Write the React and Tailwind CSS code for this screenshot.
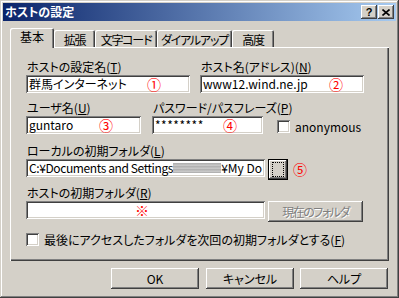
import React from "react";

const raised = "shadow-[inset_-1px_-1px_#404040,inset_1px_1px_#ffffff,inset_-2px_-2px_#808080,inset_2px_2px_#d4d0c8]";
const sunken = "shadow-[inset_1px_1px_#808080,inset_-1px_-1px_#ffffff,inset_2px_2px_#404040,inset_-2px_-2px_#d4d0c8]";

function Label({ text, mn }) {
  return (
    <div className="h-[12px] leading-[12px] whitespace-nowrap pl-px">
      {text}(<span className="underline">{mn}</span>)
    </div>
  );
}

function Input({ w, children, className = "" }) {
  return (
    <div className={`relative h-[18px] bg-white ${sunken} flex items-center pl-[3px] pr-[3px] overflow-hidden whitespace-nowrap ${w} ${className}`}>
      {children}
    </div>
  );
}

function Mark({ c, className }) {
  return <span className={`absolute top-1/2 -translate-y-1/2 text-[14px] leading-[14px] text-[#ff0000] ${className}`}>{c}</span>;
}

function Check() {
  return <div className={`w-[13px] h-[13px] bg-white shrink-0 ${sunken}`} />;
}

export default function App() {
  return (
    <div className="w-[399px] h-[298px] bg-[#d4d0c8] p-[3px] flex flex-col text-[12px] text-black font-['Noto_Sans_CJK_JP','Noto_Sans',sans-serif] [font-feature-settings:'palt'] shadow-[inset_-1px_-1px_#404040,inset_1px_1px_#d4d0c8,inset_-2px_-2px_#808080,inset_2px_2px_#ffffff]">
      {/* title bar */}
      <div className="h-[18px] flex items-center justify-between bg-[linear-gradient(to_right,#0a246a,#a6caf0)]">
        <span className="ml-[2px] text-white font-bold leading-[14px]">ホストの設定</span>
        <div className="flex gap-[1px] mr-[2px]">
          <div className={`w-[16px] h-[14px] bg-[#d4d0c8] ${raised} flex items-center justify-center text-[11px] font-bold leading-none font-['Liberation_Sans',sans-serif]`}>?</div>
          <div className={`w-[16px] h-[14px] bg-[#d4d0c8] ${raised} flex items-center justify-center`}>
            <svg width="8" height="7" viewBox="0 0 8 7"><path d="M0.5 0.5L7.5 6.5M7.5 0.5L0.5 6.5" stroke="#000" strokeWidth="1.6" /></svg>
          </div>
        </div>
      </div>

      {/* tabs */}
      <div className="ml-[7px] mt-[7px] h-[19px] flex items-end">
        <div className="relative z-10 w-[44px] h-[20px] -mb-px bg-[#d4d0c8] rounded-t-[2px] shadow-[inset_1px_1px_#ffffff,inset_-1px_0_#404040,inset_-2px_0_#808080] flex justify-center pt-[2px] leading-[14px]">基本</div>
        {[
          ["拡張", "w-[41px]"],
          ["文字コード", "w-[62px]"],
          ["ダイアルアップ", "w-[75px]"],
          ["高度", "w-[42px]"],
        ].map(([t, w]) => (
          <div key={t} className={`${w} h-[17px] rounded-t-[2px] shadow-[inset_1px_1px_#ffffff,inset_-1px_0_#404040,inset_-2px_0_#808080] flex justify-center pt-[3px] leading-[14px] whitespace-nowrap tracking-[-1.2px]`}>{t}</div>
        ))}
      </div>

      {/* panel */}
      <div className="ml-[7px] w-[379px] h-[214px] shadow-[inset_1px_1px_#ffffff,inset_-1px_-1px_#404040,inset_-2px_-2px_#808080] pl-[16px] pt-[14px] flex flex-col">
        <div className="flex">
          <div className="w-[164px] mr-[10px] flex flex-col gap-[2px]">
            <Label text="ホストの設定名" mn="T" />
            <Input w="w-[164px]">群馬インターネット<Mark c="①" className="left-[121px]" /></Input>
          </div>
          <div className="w-[164px] flex flex-col gap-[2px]">
            <Label text="ホスト名(アドレス)" mn="N" />
            <Input w="w-[164px]">www12.wind.ne.jp<Mark c="②" className="left-[129px]" /></Input>
          </div>
        </div>

        <div className="flex mt-[9px]">
          <div className="w-[115px] mr-[11px] flex flex-col gap-[2px]">
            <Label text="ユーザ名" mn="U" />
            <Input w="w-[115px]">guntaro<Mark c="③" className="left-[73px]" /></Input>
          </div>
          <div className="w-[111px] flex flex-col gap-[2px]">
            <Label text="パスワード/パスフレーズ" mn="P" />
            <Input w="w-[111px]"><span className="tracking-[0.5px]">********</span><Mark c="④" className="left-[71px]" /></Input>
          </div>
          <div className="ml-[14px] pt-[18px] flex items-center h-[31px]">
            <Check />
            <span className="ml-[5px] leading-[13px]">anonymous</span>
          </div>
        </div>

        <div className="mt-[11px] flex flex-col gap-[2px]">
          <Label text="ローカルの初期フォルダ" mn="L" />
          <div className="flex items-start">
            <Input w="w-[239px]">
              <span className="tracking-[-0.4px]">C:¥Documents and Settings</span>
              <div className="flex-1 h-[10px] bg-[repeating-linear-gradient(to_bottom,#b8b8b8_0px,#6a6a6a_1px,#d8d8d8_2px,#888888_3px)] opacity-70" />
              <span>¥My Do</span>
            </Input>
            <div className="ml-[3px] w-[20px] h-[21px] bg-[#d4d0c8] border border-black shadow-[inset_-1px_-1px_#404040,inset_1px_1px_#ffffff,inset_-2px_-2px_#808080] flex items-center justify-center">
              <div className="w-[12px] h-[15px] border border-dotted border-black" />
            </div>
            <span className="ml-[5px] mt-[3px] text-[14px] leading-[14px] text-[#ff0000]">⑤</span>
          </div>
        </div>

        <div className="mt-[7px] flex flex-col gap-[2px]">
          <Label text="ホストの初期フォルダ" mn="R" />
          <div className="flex items-start">
            <Input w="w-[239px]"><Mark c="※" className="left-[109px] text-[12px]" /></Input>
            <div className={`ml-[3px] w-[95px] h-[21px] bg-[#d4d0c8] ${raised} flex items-center justify-center text-[#808080] [text-shadow:1px_1px_#ffffff] leading-[12px] tracking-[-1.5px]`}>現在のフォルダ</div>
          </div>
        </div>

        <div className="mt-[11px] flex items-center h-[13px]">
          <Check />
          <span className="ml-[5px] leading-[13px] whitespace-nowrap">最後にアクセスしたフォルダを次回の初期フォルダとする(<span className="underline">F</span>)</span>
        </div>
      </div>

      {/* buttons */}
      <div className="mt-[7px] ml-[108px] flex gap-[7px]">
        {["OK", "キャンセル", "ヘルプ"].map((t, i) => (
          <div key={t} className={`w-[88px] h-[21px] bg-[#d4d0c8] ${raised} flex items-center justify-center leading-[12px] ${i === 2 ? "-ml-px" : ""}`}>{t}</div>
        ))}
      </div>
    </div>
  );
}
